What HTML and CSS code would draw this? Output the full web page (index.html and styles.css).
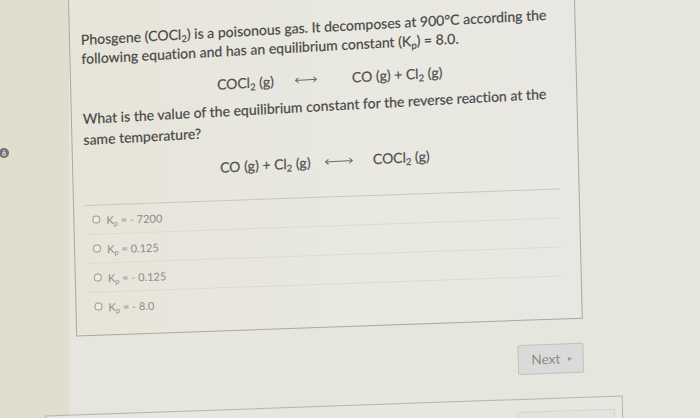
FILE: index.html
```html
<!DOCTYPE html>
<html lang="en">
<head>
<meta charset="utf-8">
<title>Question 6</title>
<link rel="stylesheet" href="styles.css">
</head>
<body>
<div class="screen">
  <aside class="gutter"><span class="badge">6</span></aside>
  <main class="stage">
    <section class="card">
      <div class="question">
        <p class="para">Phosgene (COCl<sub>2</sub>) is a poisonous gas. It decomposes at 900°C according the<br>following equation and has an equilibrium constant (K<sub>p</sub>) = 8.0.</p>
        <div class="eq eq1">
          <span class="side">COCl<sub>2</sub> (g)</span>
          <svg class="arrow a1" viewBox="0 0 22 8" width="22" height="8"><path d="M0.5 4 H21.5 M3.5 1.5 L0.5 4 L3.5 6.5 M18.5 1.5 L21.5 4 L18.5 6.5"/></svg>
          <span class="side">CO (g) + Cl<sub>2</sub> (g)</span>
        </div>
        <p class="para p2">What is the value of the equilibrium constant for the reverse reaction at the<br>same temperature?</p>
        <div class="eq eq2">
          <span class="side">CO (g) + Cl<sub>2</sub> (g)</span>
          <svg class="arrow a2" viewBox="0 0 28 8" width="28" height="8"><path d="M0.5 4 H27.5 M3.5 1.5 L0.5 4 L3.5 6.5 M24.5 1.5 L27.5 4 L24.5 6.5"/></svg>
          <span class="side">COCl<sub>2</sub> (g)</span>
        </div>
      </div>
      <ul class="options">
        <li class="option"><span class="radio"></span><span class="opt-text">K<sub>p</sub> = - 7200</span></li>
        <li class="option"><span class="radio"></span><span class="opt-text">K<sub>p</sub> = 0.125</span></li>
        <li class="option"><span class="radio"></span><span class="opt-text">K<sub>p</sub> = - 0.125</span></li>
        <li class="option"><span class="radio"></span><span class="opt-text">K<sub>p</sub> = - 8.0</span></li>
      </ul>
    </section>
    <div class="actions"><button class="next" type="button">Next <span class="caret">&#9656;</span></button></div>
    <section class="card-below"><span class="ghost-btn"></span></section>
  </main>
</div>
</body>
</html>
```
FILE: styles.css
```css
* { box-sizing: border-box; }
html, body { margin: 0; padding: 0; }
body {
  font-family: Lato, "Open Sans", "Liberation Sans", sans-serif;
  background: #e6e5de;
}
.screen {
  width: 700px;
  height: 418px;
  overflow: hidden;
  display: flex;
  background: linear-gradient(90deg, #e1ddcc 0, #e2decf 69px, #e6e5de 69px, #e6e5de 100%);
}
.gutter {
  width: 30px;
  flex: none;
  padding-top: 148px;
}
.badge {
  display: flex;
  align-items: center;
  justify-content: center;
  width: 10px;
  height: 10px;
  margin-left: -1px;
  border-radius: 50%;
  background: #707174;
  color: #f1f1f1;
  font-size: 7px;
  font-weight: 700;
  line-height: 1;
}
.stage {
  width: 640px;
  flex: none;
  transform-origin: 50px 0;
  transform: skewX(1.4deg) skewY(-2deg);
}
.card {
  margin-left: 38px;
  width: 507px;
  padding: 29.5px 19px 14px 11px;
  border: 1px solid #a9a8a1;
  border-top: none;
  background: linear-gradient(90deg, #e7e5d9 0%, #e9e8e1 55%, #e8e7e1 100%);
}
.question {
  transform-origin: 0 0;
  transform: skewY(-1.1deg);
  color: #474747;
  -webkit-text-stroke: 0.2px #474747;
}
.para {
  margin: 0;
  font-size: 14px;
  letter-spacing: 0.03px;
  line-height: 19px;
  white-space: nowrap;
}
.p2 {
  margin-top: 6.5px;
  line-height: 21px;
}
sub {
  font-size: 0.68em;
  line-height: 0;
  vertical-align: -0.28em;
}
.eq {
  display: flex;
  align-items: center;
  height: 20px;
  font-size: 14px;
  color: #525252;
  white-space: nowrap;
}
.eq1 {
  margin-top: 13.5px;
  padding-left: 135px;
}
.eq1 .side:first-child { width: 78px; }
.eq1 .arrow { margin-right: 35px; }
.eq2 {
  margin-top: 14.5px;
  padding-left: 136px;
}
.eq2 .side:first-child { width: 105px; }
.eq2 .arrow { margin-right: 20px; }
.arrow path {
  fill: none;
  stroke: #6a6a6a;
  stroke-width: 1;
}
.options {
  list-style: none;
  margin: 21px 0 0;
  padding: 0;
  border-top: 1px solid #c9c8c0;
}
.option {
  display: flex;
  align-items: center;
  gap: 6px;
  height: 29px;
  padding-left: 7px;
  border-bottom: 1px solid #dcdbd3;
  font-size: 11px;
  color: #8b8b8b;
}
.option:last-child { border-bottom: none; height: 28px; }
.radio {
  width: 8px;
  height: 8px;
  border: 1px solid #9a9a96;
  border-radius: 50%;
  background: #ecebe6;
}
.opt-text { white-space: nowrap; }
.actions {
  margin-left: 38px;
  width: 507px;
  margin-top: 24px;
  display: flex;
  justify-content: flex-end;
}
.next {
  width: 66px;
  height: 30px;
  padding: 0 0 0 2px;
  border: 1px solid #c3c2bd;
  border-radius: 2px;
  background: #dbdad8;
  color: #8a8a8a;
  font-family: Lato, "Open Sans", sans-serif;
  font-size: 13.5px;
  display: flex;
  align-items: center;
  justify-content: center;
  gap: 8px;
}
.caret {
  font-size: 8px;
  color: #9a9a9a;
}
.card-below {
  margin-top: 24px;
  margin-left: 5px;
  width: 578px;
  height: 60px;
  border: 1px solid #b5b4ad;
  background: #e7e6df;
  display: flex;
  justify-content: flex-end;
  padding: 12px 7px 0 0;
}
.ghost-btn {
  width: 98px;
  height: 30px;
  border: 1px solid #d6d5d0;
  background: #e4e3df;
}
```
